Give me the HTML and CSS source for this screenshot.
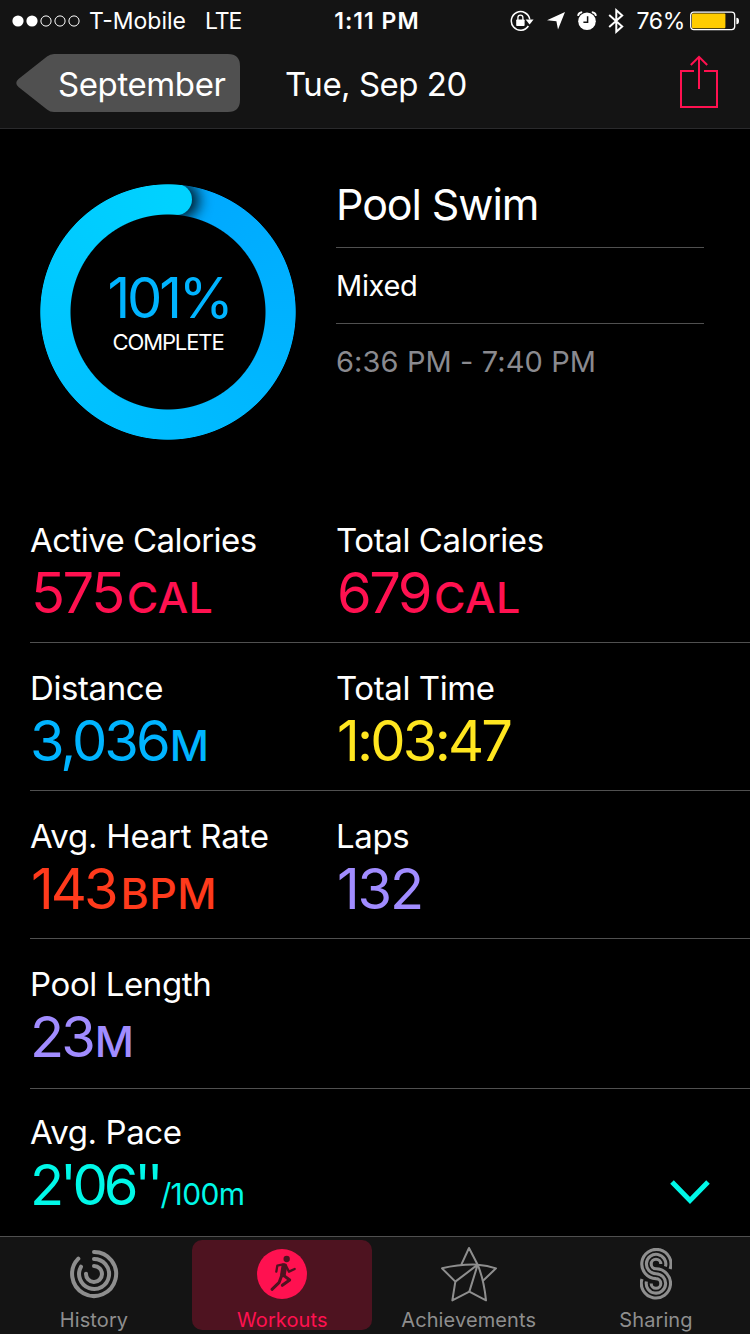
FILE: index.html
```html
<!DOCTYPE html>
<html lang="en">
<head>
  <meta charset="UTF-8">
  <title>Workout</title>
  <link rel="stylesheet" href="styles.css">
</head>
<body>
  <header class="top">
    <div class="status">
      <div class="status-left">
        <svg class="signal" width="68" height="12" viewBox="0 0 68 12">
          <circle cx="6" cy="6" r="5.6" fill="#fff"/>
          <circle cx="20" cy="6" r="5.6" fill="#fff"/>
          <circle cx="34" cy="6" r="5.1" fill="none" stroke="#fff"/>
          <circle cx="48" cy="6" r="5.1" fill="none" stroke="#fff"/>
          <circle cx="62" cy="6" r="5.1" fill="none" stroke="#fff"/>
        </svg>
        <span class="carrier">T-Mobile</span>
        <span class="network">LTE</span>
      </div>
      <div class="clock">1:11 PM</div>
      <div class="status-right">
        <svg width="24" height="22" viewBox="0 0 24 22">
          <path d="M18.4 16A9.3 9.3 0 1 1 19.8 9.5" fill="none" stroke="#fff" stroke-width="1.5"/>
          <path d="M15.6 9.6h8l-4 4.8z" fill="#fff"/>
          <rect x="6.2" y="9.5" width="8.4" height="6.6" rx="0.8" fill="#fff"/>
          <path d="M7.9 10V7.6a2.5 2.5 0 0 1 5 0V10" fill="none" stroke="#fff" stroke-width="1.3"/>
        </svg>
        <svg class="location" width="18" height="18" viewBox="0 0 18 18">
          <path d="M18 0L11 17.6 9.4 9.2 0 8.2z" fill="#fff"/>
        </svg>
        <svg class="alarm" width="20" height="20" viewBox="0 0 20 20">
          <circle cx="10" cy="10.2" r="8.8" fill="#fff"/>
          <path d="M1 4.8Q1.6 1.6 5.2 1.2M19 4.8Q18.4 1.6 14.8 1.2" fill="none" stroke="#fff" stroke-width="1.8"/>
          <path d="M10.6 5.2v6H6.4" fill="none" stroke="#141414" stroke-width="1.5"/>
        </svg>
        <svg class="bluetooth" width="16" height="28" viewBox="0 0 16 28">
          <path d="M1.2 8L14.2 19.4 8.3 24.8V3.2L14.2 8.6 1.2 20" fill="none" stroke="#fff" stroke-width="2"/>
        </svg>
        <span class="percent">76%</span>
        <svg class="battery" width="50" height="20" viewBox="0 0 50 20">
          <rect x="0.7" y="1.2" width="44" height="17.4" rx="3" fill="none" stroke="#fff" stroke-width="1.3"/>
          <rect x="2" y="2.6" width="33.4" height="14.6" rx="1" fill="#fc0"/>
          <path d="M46.4 6.8q2.6 0 2.6 3.2t-2.6 3.2z" fill="#fff"/>
        </svg>
      </div>
    </div>
    <nav class="nav">
      <a class="back">September</a>
      <h1>Tue, Sep 20</h1>
      <svg class="share" width="40" height="54" viewBox="0 0 40 54" fill="none" stroke="#ff1150" stroke-width="2">
        <path d="M15 16H2V52H38V16H25"/>
        <path d="M20 34V2M11.8 10L20 1.8 28.2 10"/>
      </svg>
    </nav>
  </header>

  <main>
    <section class="summary">
      <div class="goal">
        <div class="ring"></div>
        <div class="goal-text">
          <div class="goal-percent">101%</div>
          <div class="goal-label">COMPLETE</div>
        </div>
      </div>
      <div class="info">
        <h2>Pool Swim</h2>
        <p class="style">Mixed</p>
        <p class="hours">6:36 PM - 7:40 PM</p>
      </div>
    </section>

    <section class="stats">
      <div class="row">
        <div class="stat">
          <div class="label active-label">Active Calories</div>
          <div class="value pink">575<span class="unit cal">CAL</span></div>
        </div>
        <div class="stat">
          <div class="label">Total Calories</div>
          <div class="value pink">679<span class="unit cal">CAL</span></div>
        </div>
      </div>
      <div class="row">
        <div class="stat">
          <div class="label">Distance</div>
          <div class="value blue">3,036<span class="unit">M</span></div>
        </div>
        <div class="stat">
          <div class="label">Total Time</div>
          <div class="value yellow">1:03:47</div>
        </div>
      </div>
      <div class="row">
        <div class="stat">
          <div class="label heart-label">Avg. Heart Rate</div>
          <div class="value red">143<span class="unit bpm">BPM</span></div>
        </div>
        <div class="stat">
          <div class="label">Laps</div>
          <div class="value purple laps">132</div>
        </div>
      </div>
      <div class="row tall">
        <div class="stat">
          <div class="label">Pool Length</div>
          <div class="value purple">23<span class="unit">M</span></div>
        </div>
      </div>
      <div class="row last">
        <div class="stat">
          <div class="label">Avg. Pace</div>
          <div class="value teal">2'06''<span class="per">/100m</span></div>
        </div>
        <svg class="chevron" width="40" height="26" viewBox="0 0 40 26">
          <path d="M2 3L20 21.5 38 3" fill="none" stroke="#00f8e8" stroke-width="5"/>
        </svg>
      </div>
    </section>
  </main>

  <footer class="tabs">
    <a class="tab">
      <svg width="50" height="52" viewBox="207 54 150 156" fill="none" stroke="#8e8e8e" stroke-width="12" stroke-linecap="round">
        <path d="M282 66A66 66 0 1 1 235 86"/>
        <path d="M282 87A45 45 0 1 1 243 110"/>
        <path d="M282 108A24 24 0 1 1 258 131"/>
      </svg>
      <span>History</span>
    </a>
    <a class="tab active">
      <svg width="50" height="52" viewBox="771 54 150 156">
        <circle cx="846" cy="132" r="75" fill="#ff1150"/>
        <circle cx="860" cy="87" r="9.5" fill="#4e1320"/>
        <g fill="none" stroke="#4e1320" stroke-linecap="round" stroke-linejoin="round">
          <path d="M853 108L849 133" stroke-width="17"/>
          <path d="M849 103L832 107 829 125" stroke-width="7"/>
          <path d="M858 108L867 125 884 117" stroke-width="7"/>
          <path d="M851 136L869 150 847 166" stroke-width="9"/>
          <path d="M846 134L837 158 816 178" stroke-width="9"/>
        </g>
      </svg>
      <span>Workouts</span>
    </a>
    <a class="tab">
      <svg class="star" width="58" height="56" viewBox="196 48 174 168" fill="none" stroke="#8e8e8e" stroke-width="6" stroke-linejoin="round">
        <path d="M260 104L283 54 309 104Q328 150 334 211L284 185 233 211 242 155 202 115Q256 102 309 104Q338 106 364 115L325 152"/>
        <path d="M242 155L309 104 284 185"/>
      </svg>
      <span>Achievements</span>
    </a>
    <a class="tab">
      <svg width="32" height="52" viewBox="0 0 32 52" fill="none" stroke="#8e8e8e" stroke-width="3.1">
        <path d="M30.1 21A14.6 14.6 0 1 0 16 30.6A4.8 4.8 0 1 1 11.2 35.4"/>
        <path d="M25.5 18.5A9.7 9.7 0 1 0 16 25.7A9.7 9.7 0 1 1 6.4 33.5"/>
        <path d="M20.8 16A4.8 4.8 0 1 0 16 20.8A14.6 14.6 0 1 1 2 31"/>
      </svg>
      <span>Sharing</span>
    </a>
  </footer>
</body>
</html>
```
FILE: styles.css
```css
* {
  box-sizing: border-box;
  margin: 0;
  padding: 0;
}

body {
  width: 750px;
  height: 1334px;
  display: flex;
  flex-direction: column;
  background-color: #000000;
  color: #ffffff;
  font-family: 'Inter', 'Liberation Sans', sans-serif;
  overflow: hidden;
}

svg {
  display: block;
  flex: none;
}

.top {
  height: 129px;
  background-color: #141414;
  border-bottom: 1px solid #2a2a2c;
}

.status {
  display: grid;
  grid-template-columns: 1fr auto 1fr;
  align-items: center;
  height: 42px;
  padding: 0 10px 0 12px;
  font-size: 23px;
  white-space: nowrap;
}

.status-left, .status-right {
  display: flex;
  align-items: center;
}

.status-right {
  justify-content: flex-end;
}

.signal {
  margin-bottom: 1px;
}

.carrier {
  margin-left: 9px;
}

.network {
  margin-left: 19px;
  letter-spacing: -1px;
}

.clock {
  padding-left: 2px;
  font-weight: 600;
  letter-spacing: 1px;
}

.location {
  margin-left: 13px;
}

.alarm {
  margin-left: 12px;
}

.bluetooth {
  margin-left: 11px;
}

.percent {
  margin-left: 12px;
  letter-spacing: -0.3px;
}

.battery {
  margin-left: 5px;
}

.nav {
  display: flex;
  height: 86px;
  padding: 12px 31px 0 16px;
}

.back {
  width: 224px;
  height: 58px;
  padding-left: 42px;
  background-color: #505050;
  clip-path: path("M38 0H212Q224 0 224 12V46Q224 58 212 58H38Q34 58 31 55.5L2.5 33Q-2 29 2.5 25L31 2.5Q34 0 38 0Z");
  font-size: 33px;
  line-height: 61px;
  letter-spacing: -0.4px;
}

.nav h1 {
  margin-left: 45px;
  font-size: 33px;
  font-weight: 400;
  line-height: 61px;
  letter-spacing: -0.5px;
}

.share {
  margin: 1px 0 0 auto;
}

.summary {
  display: flex;
  height: 366px;
  padding: 55px 46px 0 40px;
}

.goal {
  display: grid;
  width: 256px;
  height: 256px;
}

.goal > * {
  grid-area: 1 / 1;
}

.ring {
  position: relative;
  -webkit-mask: radial-gradient(circle, transparent 97px, #000 98px, #000 127.3px, transparent 128.1px);
  mask: radial-gradient(circle, transparent 97px, #000 98px, #000 127.3px, transparent 128.1px);
}

.ring, .ring::after {
  background: conic-gradient(from 5deg, #00a8ff, #00d2ff);
}

/* rounded end of the progress bar, overlapping its start */
.ring::before {
  content: "";
  position: absolute;
  left: 121px;
  top: 0;
  width: 31px;
  height: 31px;
  border-radius: 50%;
  background-color: #00d2ff;
  box-shadow: 4px 1px 14px 3px rgba(0, 0, 0, 0.85);
}

.ring::after {
  content: "";
  position: absolute;
  inset: 0;
  clip-path: inset(0 119px 128px 0);
}

.goal-text {
  padding-top: 88px;
  text-align: center;
}

.goal-percent {
  height: 56px;
  padding-left: 2px;
  color: #00b4ff;
  font-size: 56px;
  line-height: 53px;
  letter-spacing: -3.2px;
}

.goal-label {
  font-size: 22px;
  line-height: 28px;
  letter-spacing: -1.1px;
}

.info {
  width: 368px;
  margin-left: 40px;
}

.info h2 {
  height: 64px;
  border-bottom: 1px solid #505050;
  font-size: 43px;
  font-weight: 400;
  line-height: 41px;
  letter-spacing: -1.1px;
}

.info p {
  font-size: 29px;
  line-height: 76px;
}

.info .style {
  height: 76px;
  border-bottom: 1px solid #505050;
  letter-spacing: -0.3px;
}

.info .hours {
  color: #8a8a8f;
  letter-spacing: 0.1px;
}

.row {
  display: flex;
  height: 148px;
  margin-left: 30px;
  padding-top: 24px;
  border-bottom: 1px solid #505050;
}

.row.tall {
  height: 150px;
}

.row.last {
  height: 146px;
  padding-top: 22px;
  border-bottom: none;
}

.stat {
  width: 306px;
  white-space: nowrap;
}

.label {
  height: 40px;
  font-size: 33px;
  line-height: 42px;
  letter-spacing: -0.4px;
}

.active-label {
  letter-spacing: -0.55px;
}

.heart-label {
  letter-spacing: -0.25px;
}

.value {
  font-size: 56px;
  line-height: 69px;
  letter-spacing: -3px;
}

.unit {
  margin-left: 2px;
  font-size: 43px;
  font-weight: 500;
  letter-spacing: 0;
}

.cal {
  margin-left: 4px;
  letter-spacing: 0.4px;
}

.bpm {
  margin-left: 5px;
  letter-spacing: 0.4px;
}

.per {
  margin-left: 1px;
  font-size: 30px;
  letter-spacing: -0.6px;
}

.pink { padding-left: 1px; color: #ff1150; letter-spacing: -2.5px; }
.blue { color: #00b4ff; letter-spacing: -3px; }
.yellow { padding-left: 1px; color: #ffe620; letter-spacing: -2.8px; }
.red { padding-left: 1px; color: #ff3a1c; }
.purple { color: #a18cff; }
.teal { color: #00f8e8; letter-spacing: -4.2px; }

.laps {
  padding-left: 1px;
  letter-spacing: -2.2px;
}

.chevron {
  margin: 68px 40px 0 auto;
}

.tabs {
  display: flex;
  justify-content: space-between;
  height: 98px;
  margin-top: auto;
  padding: 3px 4px 0;
  background-color: #141414;
  border-top: 1px solid #505050;
}

.tab {
  display: flex;
  flex-direction: column;
  align-items: center;
  justify-content: space-between;
  width: 180px;
  height: 90px;
  padding-top: 8px;
  border-radius: 10px;
  color: #8e8e8e;
  font-size: 20px;
  line-height: 20px;
  letter-spacing: 0.1px;
}

.tab.active {
  margin: 0 -1px 0 1px;
  background-color: #4e1320;
  color: #ff1150;
}

.star {
  margin-top: -2px;
}
```
